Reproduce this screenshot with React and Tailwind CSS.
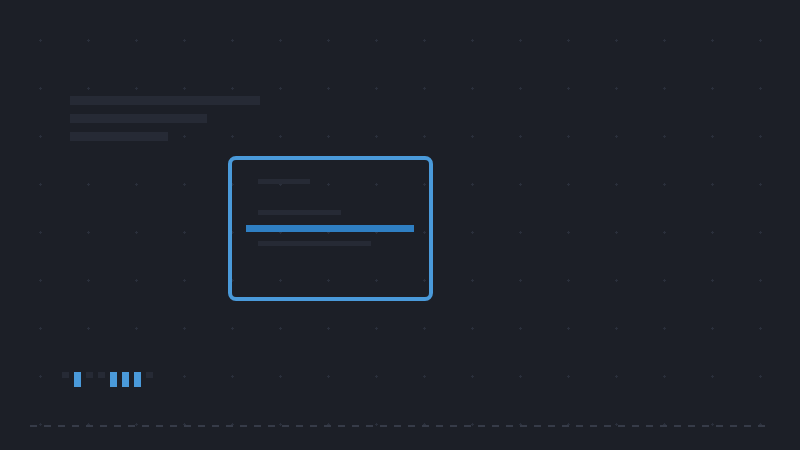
import React from 'react';

const levels = [false, true, false, false, true, true, true, false];

function GridMarks() {
  return (
    <svg className="absolute inset-0 h-full w-full" width="800" height="450">
      <defs>
        <pattern id="marks" width="48" height="48" patternUnits="userSpaceOnUse">
          <rect x="39" y="40" width="3" height="1" fill="#2a2f3b" />
          <rect x="40" y="39" width="1" height="3" fill="#2a2f3b" />
        </pattern>
      </defs>
      <rect width="800" height="450" fill="url(#marks)" />
    </svg>
  );
}

export default function App() {
  return (
    <div className="relative h-[450px] w-[800px] overflow-hidden bg-[#1c1f27]">
      <GridMarks />

      <div className="relative flex flex-col">
        {/* heading placeholder lines */}
        <div className="ml-[70px] mt-[96px] flex flex-col gap-[9px]">
          <div className="h-[9px] w-[190px] bg-[#262a35]" />
          <div className="h-[9px] w-[137px] bg-[#262a35]" />
          <div className="h-[9px] w-[98px] bg-[#262a35]" />
        </div>

        {/* selected list card */}
        <div className="ml-[228px] mt-[15px] flex h-[145px] w-[205px] flex-col rounded-[8px] border-4 border-[#4a9ada]">
          <div className="ml-[26px] mt-[19px] h-[5px] w-[52px] bg-[#262a35]" />
          <div className="ml-[26px] mt-[26px] h-[5px] w-[83px] bg-[#262a35]" />
          <div className="ml-[14px] mt-[10px] h-[7px] w-[168px] bg-[#2f7fc3]" />
          <div className="ml-[26px] mt-[9px] h-[5px] w-[113px] bg-[#262a35]" />
        </div>

        {/* level indicator */}
        <div className="ml-[62px] mt-[71px] flex items-start gap-[5px]">
          {levels.map((on, i) =>
            on ? (
              <div key={i} className="h-[15px] w-[7px] bg-[#4a9ada]" />
            ) : (
              <div key={i} className="h-[6px] w-[7px] bg-[#262a35]" />
            )
          )}
        </div>

        {/* dashed rule */}
        <div className="ml-[30px] mt-[38px] h-[2px] w-[735px] bg-[repeating-linear-gradient(90deg,#363b48_0_7px,transparent_7px_14px)]" />
      </div>
    </div>
  );
}
